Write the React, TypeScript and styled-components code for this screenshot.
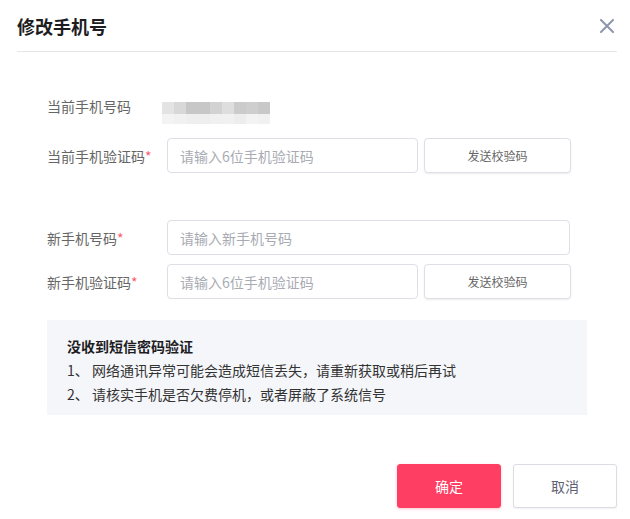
import React from 'react';
import styled, { createGlobalStyle } from 'styled-components';

const GlobalStyle = createGlobalStyle`
    html, body {
        margin: 0;
        padding: 0;
        background: #ffffff;
    }
    * {
        box-sizing: border-box;
    }
`;

const Dialog = styled.div`
    width: 630px;
    height: 519px;
    display: flex;
    flex-direction: column;
    background: #ffffff;
    font-family: "Noto Sans CJK SC", "Noto Sans", sans-serif;
`;

const Header = styled.div`
    height: 52px;
    margin: 0 13px 0 17px;
    padding-right: 3px;
    display: flex;
    align-items: center;
    justify-content: space-between;
    border-bottom: 1px solid #e4e5e9;
`;

const Title = styled.h2`
    margin: 0;
    font-size: 18px;
    font-weight: 700;
    line-height: 24px;
    color: #1d1d1f;
`;

const CloseButton = styled.button`
    width: 14px;
    height: 14px;
    padding: 0;
    border: none;
    background: none;
    display: flex;
    cursor: pointer;
`;

const Body = styled.div`
    padding: 42px 0 0 47px;
    display: flex;
    flex-direction: column;
`;

const Row = styled.div<{ $top?: number; $align?: string }>`
    display: flex;
    align-items: ${(p) => p.$align || 'center'};
    margin-top: ${(p) => p.$top || 0}px;
`;

const Label = styled.div<{ $lh?: number }>`
    width: 120px;
    flex-shrink: 0;
    font-size: 14px;
    line-height: ${(p) => p.$lh || 20}px;
    color: #666666;
`;

const Star = styled.span`
    color: #ff5a6e;
`;

const Mosaic = styled.svg`
    display: block;
    margin: 8px 0 -6px -5px;
`;

const Input = styled.input<{ $width: number }>`
    width: ${(p) => p.$width}px;
    height: 35px;
    padding: 0 12px;
    border: 1px solid #dcdfe6;
    border-radius: 4px;
    font-family: inherit;
    font-size: 14px;
    color: #333333;
    outline: none;
    &::placeholder {
        color: #a9abb3;
    }
`;

const CodeButton = styled.button`
    width: 147px;
    height: 35px;
    margin-left: 6px;
    border: 1px solid #dcdfe6;
    border-radius: 4px;
    background: #ffffff;
    box-shadow: 0 1px 2px rgba(0, 0, 0, 0.08);
    font-family: inherit;
    font-size: 12px;
    color: #666666;
    cursor: pointer;
`;

const Notice = styled.div`
    width: 540px;
    margin-top: 21px;
    padding: 14px 20px 9px;
    background: #f5f6fa;
    font-size: 14px;
    line-height: 24px;
    color: #333333;
`;

const NoticeTitle = styled.div`
    font-weight: 700;
    color: #1d1d1f;
`;

const Footer = styled.div`
    margin-top: auto;
    padding: 0 13px 11px 0;
    display: flex;
    justify-content: flex-end;
    gap: 12px;
`;

const ActionButton = styled.button<{ $primary?: boolean }>`
    width: 104px;
    height: 44px;
    border-radius: 3px;
    border: 1px solid ${(p) => (p.$primary ? '#ff3e63' : '#dcdde4')};
    background: ${(p) => (p.$primary ? '#ff3e63' : '#ffffff')};
    color: ${(p) => (p.$primary ? '#ffffff' : '#5f6275')};
    box-shadow: ${(p) => (p.$primary ? '0 1px 3px rgba(255, 62, 99, 0.3)' : '0 1px 2px rgba(0, 0, 0, 0.06)')};
    font-family: inherit;
    font-size: 14px;
    cursor: pointer;
`;

const topShades = ['#e3e3e3', '#d8d8d8', '#c7c7c7', '#c7c7c7', '#d2d2d2', '#dedede', '#cbcbcb', '#cecece', '#c8c8c8'];
const bottomShades = ['#f3f3f3', '#f1f1f1', '#efefef', '#eeeeee', '#f0f0f0', '#f1f1f1', '#ededed', '#f3f3f3', '#f1f1f1'];

const PhoneMosaic = () => (
    <Mosaic width="108" height="22" viewBox="0 0 108 22">
        {topShades.map((c, i) => (
            <rect key={'t' + i} x={i * 12} y={0} width={12} height={12} fill={c} />
        ))}
        {bottomShades.map((c, i) => (
            <rect key={'b' + i} x={i * 12} y={12} width={12} height={10} fill={c} />
        ))}
    </Mosaic>
);

const App = () => {
    return (
        <>
            <GlobalStyle />
            <Dialog>
                <Header>
                    <Title>修改手机号</Title>
                    <CloseButton aria-label="关闭">
                        <svg width="14" height="14" viewBox="0 0 14 14">
                            <path d="M1 1 L13 13 M13 1 L1 13" stroke="#8f96ac" strokeWidth="2" strokeLinecap="round" />
                        </svg>
                    </CloseButton>
                </Header>

                <Body>
                    <Row $align="flex-start">
                        <Label $lh={24}>当前手机号码</Label>
                        <PhoneMosaic />
                    </Row>
                    <Row $top={20}>
                        <Label>
                            当前手机验证码<Star>*</Star>
                        </Label>
                        <Input $width={251} placeholder="请输入6位手机验证码" />
                        <CodeButton>发送校验码</CodeButton>
                    </Row>

                    <Row $top={47}>
                        <Label>
                            新手机号码<Star>*</Star>
                        </Label>
                        <Input $width={403} placeholder="请输入新手机号码" />
                    </Row>
                    <Row $top={9}>
                        <Label>
                            新手机验证码<Star>*</Star>
                        </Label>
                        <Input $width={251} placeholder="请输入6位手机验证码" />
                        <CodeButton>发送校验码</CodeButton>
                    </Row>

                    <Notice>
                        <NoticeTitle>没收到短信密码验证</NoticeTitle>
                        <div>1、 网络通讯异常可能会造成短信丢失，请重新获取或稍后再试</div>
                        <div>2、 请核实手机是否欠费停机，或者屏蔽了系统信号</div>
                    </Notice>
                </Body>

                <Footer>
                    <ActionButton $primary>确定</ActionButton>
                    <ActionButton>取消</ActionButton>
                </Footer>
            </Dialog>
        </>
    );
};

export default App;
